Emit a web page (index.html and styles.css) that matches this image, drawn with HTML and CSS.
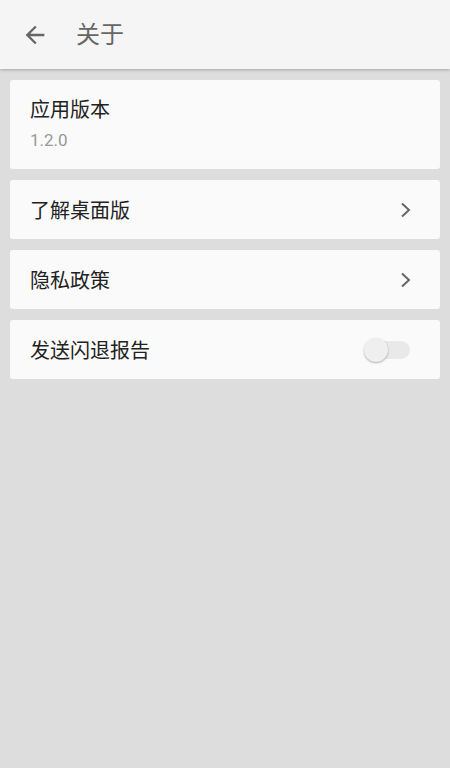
FILE: index.html
```html
<!doctype html>
<html>
<head>
    <meta charset="utf-8">
    <link rel="stylesheet" href="styles.css">
</head>
<body>
    <header class="topbar">
        <svg class="back" viewBox="0 0 24 24" width="28" height="28">
            <path d="M20 11H7.83l5.59-5.59L12 4l-8 8 8 8 1.41-1.41L7.83 13H20v-2z" fill="#666"/>
        </svg>
        <span class="title">关于</span>
    </header>
    <main class="list">
        <div class="card card-info">
            <div class="label">应用版本</div>
            <div class="sub">1.2.0</div>
        </div>
        <div class="card row">
            <span class="label">了解桌面版</span>
            <svg class="chevron" viewBox="0 0 12 16" width="12" height="16">
                <polyline points="2,1.5 9,8 2,14.5" fill="none" stroke="#666" stroke-width="2"/>
            </svg>
        </div>
        <div class="card row">
            <span class="label">隐私政策</span>
            <svg class="chevron" viewBox="0 0 12 16" width="12" height="16">
                <polyline points="2,1.5 9,8 2,14.5" fill="none" stroke="#666" stroke-width="2"/>
            </svg>
        </div>
        <div class="card row">
            <span class="label">发送闪退报告</span>
            <div class="toggle"><span class="track"></span><span class="thumb"></span></div>
        </div>
    </main>
</body>
</html>
```

FILE: styles.css
```css
body {
    margin: 0;
    background: #dddddd;
    font-family: "Noto Sans CJK SC", "Noto Sans", Roboto, sans-serif;
}
.topbar {
    height: 69px;
    background: #f5f5f5;
    display: flex;
    align-items: center;
    padding-left: 21px;
    box-shadow: 0 1px 3px rgba(0, 0, 0, 0.25);
    position: relative;
}
.back {
    display: block;
    margin-top: 1px;
}
.title {
    margin-left: 27px;
    font-size: 24px;
    color: #666;
    line-height: 30px;
    margin-top: -3px;
}
.list {
    padding: 11px 10px;
    display: flex;
    flex-direction: column;
    gap: 11px;
}
.card {
    background: #fafafa;
    border-radius: 3px;
    padding: 0 20px;
}
.card-info {
    padding-top: 16px;
    padding-bottom: 19px;
}
.label {
    font-size: 20px;
    color: #222;
    line-height: 26px;
}
.sub {
    margin-top: 8px;
    font-family: Roboto, sans-serif;
    font-size: 17px;
    color: #999;
    line-height: 20px;
}
.row {
    height: 59px;
    display: flex;
    align-items: center;
    justify-content: space-between;
}
.chevron {
    display: block;
    margin-right: 8px;
}
.toggle {
    position: relative;
    width: 46px;
    height: 26px;
    margin-right: 10px;
}
.track {
    position: absolute;
    left: 6px;
    right: 0;
    top: 4px;
    height: 18px;
    border-radius: 9px;
    background: #e9e9e9;
}
.thumb {
    position: absolute;
    left: 0;
    top: 1px;
    width: 24px;
    height: 24px;
    border-radius: 50%;
    background: #efefef;
    box-shadow: 0 1px 2px rgba(0, 0, 0, 0.3);
}
```
